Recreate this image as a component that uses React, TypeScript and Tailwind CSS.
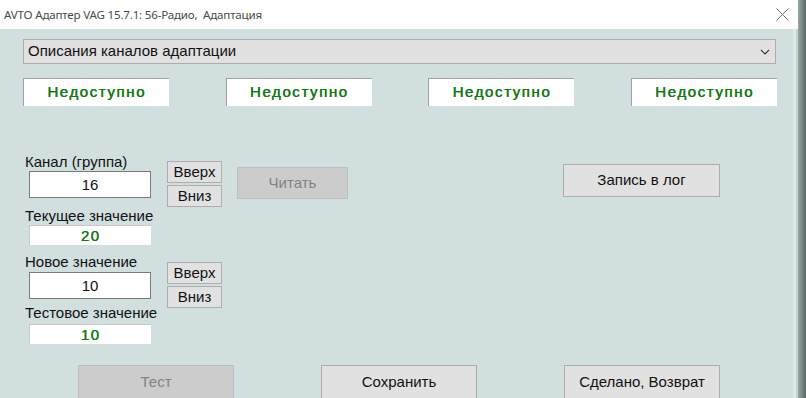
import React from "react";

const F = { fontFamily: '"Liberation Sans", Arial, sans-serif' };

function Btn({ label, disabled, cls }: { label: string; disabled?: boolean; cls: string }) {
  return (
    <div
      className={
        "flex items-center justify-center border text-[15px] " +
        (disabled
          ? "bg-[#cccccc] border-[#bfbfbf] text-[#838383] "
          : "bg-[#e1e1e1] border-[#adadad] text-[#111] ") +
        cls
      }
    >
      {label}
    </div>
  );
}

function Status() {
  return (
    <div className="w-[146px] h-[28px] bg-white border-l border-t border-[#a0a0a0] flex items-center justify-center text-[15px] tracking-[1.6px] text-[#137a13] [text-shadow:0.5px_0_0_#137a13]">
      Недоступно
    </div>
  );
}

function Small({ v }: { v: string }) {
  return (
    <div className="ml-[4px] w-[122px] h-[20px] bg-white border-l border-t border-[#c8c8c8] flex items-center justify-center text-[15px] tracking-[1.5px] text-[#137a13] [text-shadow:0.5px_0_0_#137a13]">
      {v}
    </div>
  );
}

function Input({ v }: { v: string }) {
  return (
    <div className="ml-[4px] w-[122px] h-[27px] bg-white border border-[#7a7a7a] flex items-center justify-center text-[15px] text-[#111]">
      {v}
    </div>
  );
}

export default function App() {
  return (
    <div className="w-[806px] h-[398px] flex overflow-hidden bg-[#d1dfdf]" style={F}>
      <div className="w-[798px] h-full flex flex-col">
        <div
          className="h-[29px] shrink-0 bg-white flex items-center justify-between pl-[4px] pr-[8px]"
          style={{ fontFamily: '"Noto Sans", sans-serif' }}
        >
          <span className="text-[11.6px] text-[#4a4a4a] whitespace-pre tracking-[-0.2px]">
            {"AVTO Адаптер VAG 15.7.1: 56-Радио,  Адаптация"}
          </span>
          <svg width="13" height="13" viewBox="0 0 13 13" className="mr-[1px]">
            <path d="M0.5 0.5 L12.5 12.5 M12.5 0.5 L0.5 12.5" stroke="#707070" strokeWidth="1" fill="none" />
          </svg>
        </div>
        <div className="flex-1 flex bg-[#d1dfdf]">
          <div className="flex-1 flex flex-col">
            <div className="mt-[10px] ml-[23px] w-[753px] h-[25px] bg-[#e1e1e1] border border-[#adadad] flex items-center justify-between pl-[4px] pr-[5px]">
              <span className="text-[15px] text-[#111]">Описания каналов адаптации</span>
              <svg width="10" height="6" viewBox="0 0 10 6">
                <path d="M1 1 L5 5 L9 1" stroke="#333" strokeWidth="1.1" fill="none" />
              </svg>
            </div>
            <div className="mt-[14px] ml-[23px] w-[754px] flex justify-between">
              <Status />
              <Status />
              <Status />
              <Status />
            </div>
            <div className="mt-[47px] flex items-start">
              <div className="ml-[25px] w-[142px] flex flex-col text-[15px] leading-[17px] text-[#111] whitespace-nowrap">
                <span>Канал (группа)</span>
                <div className="mt-[1px]">
                  <Input v="16" />
                </div>
                <span className="mt-[9px]">Текущее значение</span>
                <div className="mt-[1px]">
                  <Small v="20" />
                </div>
                <span className="mt-[8px]">Новое значение</span>
                <div className="mt-[2px]">
                  <Input v="10" />
                </div>
                <span className="mt-[5px]">Тестовое значение</span>
                <div className="mt-[3px]">
                  <Small v="10" />
                </div>
              </div>
              <div className="w-[55px] mt-[8px] flex flex-col">
                <Btn label="Вверх" cls="h-[22px]" />
                <Btn label="Вниз" cls="h-[22px] mt-[2px]" />
                <Btn label="Вверх" cls="h-[22px] mt-[55px]" />
                <Btn label="Вниз" cls="h-[22px] mt-[2px]" />
              </div>
              <Btn label="Читать" disabled cls="ml-[15px] mt-[14px] w-[111px] h-[32px]" />
              <Btn label="Запись в лог" cls="ml-[215px] mt-[11px] w-[157px] h-[33px]" />
            </div>
            <div className="mt-[21px] flex">
              <Btn label="Тест" disabled cls="ml-[78px] w-[156px] h-[34px]" />
              <Btn label="Сохранить" cls="ml-[87px] w-[156px] h-[34px]" />
              <Btn label="Сделано, Возврат" cls="ml-[87px] w-[156px] h-[34px]" />
            </div>
          </div>
          <div className="w-[3px] bg-[#dde8e8]" />
          <div className="w-[2px] bg-[#c4d2d2]" />
        </div>
      </div>
      <div className="w-[8px] h-full bg-gradient-to-r from-[#9aa8a8] to-[#5b6868]" />
    </div>
  );
}
